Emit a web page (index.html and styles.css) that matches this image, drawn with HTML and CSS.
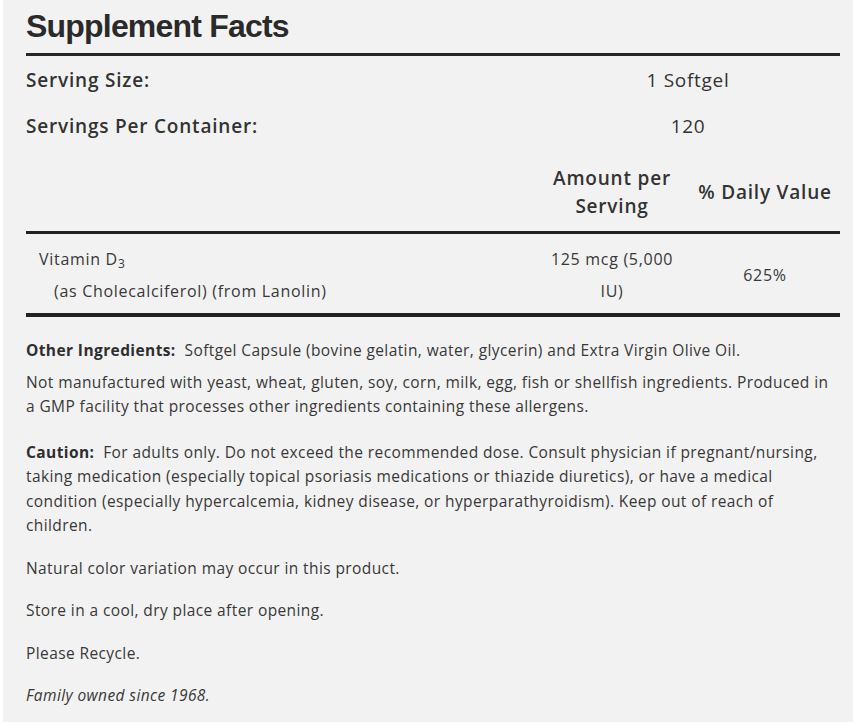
FILE: index.html
```html
<!DOCTYPE html>
<html>
<head>
<meta charset="utf-8">
<link rel="stylesheet" href="styles.css">
</head>
<body>
<div class="panel">
  <h1 class="title">Supplement Facts</h1>
  <div class="facts">
    <div class="row serving">
      <div class="label">Serving Size:</div>
      <div class="value">1 Softgel</div>
    </div>
    <div class="row serving">
      <div class="label">Servings Per Container:</div>
      <div class="value">120</div>
    </div>
    <div class="row head">
      <div class="label"></div>
      <div class="amt">Amount per<br>Serving</div>
      <div class="dv">% Daily Value</div>
    </div>
    <div class="row nutrient">
      <div class="label nname">Vitamin D<sub>3</sub><span class="src">(as Cholecalciferol) (from Lanolin)</span></div>
      <div class="amt">125 mcg (5,000<br>IU)</div>
      <div class="dv">625%</div>
    </div>
  </div>
  <div class="notes">
    <p><b>Other Ingredients:</b>&nbsp; Softgel Capsule (bovine gelatin, water, glycerin) and Extra Virgin Olive Oil.</p>
    <p>Not manufactured with yeast, wheat, gluten, soy, corn, milk, egg, fish or shellfish ingredients. Produced in a GMP facility that processes other ingredients containing these allergens.</p>
    <p class="caution"><b>Caution:</b>&nbsp; For adults only. Do not exceed the recommended dose. Consult physician if pregnant/nursing, taking medication (especially topical psoriasis medications or thiazide diuretics), or have a medical condition (especially hypercalcemia, kidney disease, or hyperparathyroidism). Keep out of reach of children.</p>
    <p>Natural color variation may occur in this product.</p>
    <p>Store in a cool, dry place after opening.</p>
    <p>Please Recycle.</p>
    <p><i>Family owned since 1968.</i></p>
  </div>
</div>
</body>
</html>
```

FILE: styles.css
```css
html, body {
  margin: 0;
  padding: 0;
  background: #ffffff;
}
.panel {
  margin-left: 3px;
  width: 850px;
  height: 722px;
  background: #f2f2f2;
  box-sizing: border-box;
  padding: 0 13px 0 23px;
  font-family: "Open Sans", "Noto Sans", sans-serif;
  color: #383838;
  overflow: hidden;
}
.title {
  margin: 0;
  padding-top: 6px;
  font-family: "Liberation Sans", Arial, sans-serif;
  font-weight: 700;
  font-size: 32px;
  letter-spacing: -0.8px;
  line-height: 40px;
  color: #2a2a2a;
  padding-bottom: 7px;
  border-bottom: 3px solid #262626;
}
.facts {
  border-bottom: 4px solid #222;
}
.row {
  display: grid;
  grid-template-columns: 1fr 156px 150px;
  align-items: center;
}
.serving {
  grid-template-columns: 1fr 304px;
  height: 46px;
  font-size: 19px;
  letter-spacing: 0.8px;
  font-weight: 600;
  color: #333;
}
.serving .value {
  text-align: center;
  font-weight: 400;
  letter-spacing: 0.7px;
}
.serving:first-child {
  margin-top: 1px;
}
.head {
  font-size: 19px;
  letter-spacing: 0.8px;
  font-weight: 600;
  color: #333;
  line-height: 28px;
  padding: 15px 0 11px;
  border-bottom: 3px solid #222;
}
.head .amt, .head .dv {
  text-align: center;
}
.head .dv {
  white-space: nowrap;
}
.nutrient {
  font-size: 16px;
  letter-spacing: 0.7px;
  line-height: 32px;
  padding: 9px 0 6px;
}
.nname {
  padding-left: 13px;
}
.nname sub {
  font-size: 12px;
  vertical-align: -3px;
  line-height: 0;
}
.src {
  display: block;
  padding-left: 15px;
}
.nutrient .amt, .nutrient .dv {
  text-align: center;
}
.notes {
  padding-top: 21px;
  font-size: 15.5px;
  letter-spacing: 0.4px;
  line-height: 24.5px;
  color: #383838;
}
.notes p {
  margin: 0 0 18px;
}
.notes p:first-child {
  margin-bottom: 7px;
}
.notes .caution {
  padding-top: 3px;
}
.notes b {
  font-weight: 700;
  color: #2e2e2e;
}
```
